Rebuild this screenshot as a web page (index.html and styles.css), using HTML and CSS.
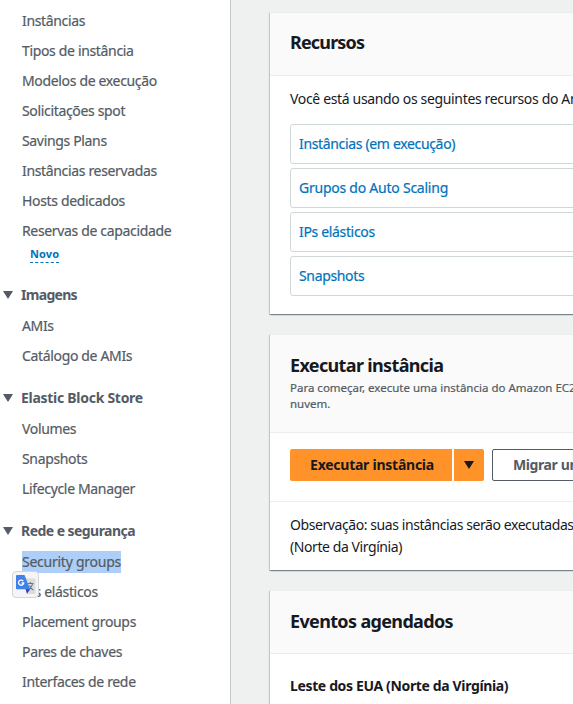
FILE: index.html
```html
<!DOCTYPE html>
<html lang="pt-BR">
<head>
<meta charset="utf-8">
<title>EC2</title>
<link rel="stylesheet" href="styles.css">
</head>
<body>
<div class="app">
  <nav class="sidebar">
    <ul class="links">
      <li><a>Instâncias</a></li>
      <li><a>Tipos de instância</a></li>
      <li><a>Modelos de execução</a></li>
      <li><a>Solicitações spot</a></li>
      <li><a>Savings Plans</a></li>
      <li><a>Instâncias reservadas</a></li>
      <li><a>Hosts dedicados</a></li>
      <li><a>Reservas de capacidade</a></li>
    </ul>
    <div class="new-row"><span class="new">Novo</span></div>
    <h3><svg class="caret" viewBox="0 0 10 8"><path d="M0 0h10L5 8z"/></svg>Imagens</h3>
    <ul class="links">
      <li><a>AMIs</a></li>
      <li><a>Catálogo de AMIs</a></li>
    </ul>
    <h3 class="storage"><svg class="caret" viewBox="0 0 10 8"><path d="M0 0h10L5 8z"/></svg>Elastic Block Store</h3>
    <ul class="links">
      <li><a>Volumes</a></li>
      <li><a>Snapshots</a></li>
      <li><a>Lifecycle Manager</a></li>
    </ul>
    <h3 class="network"><svg class="caret" viewBox="0 0 10 8"><path d="M0 0h10L5 8z"/></svg>Rede e segurança</h3>
    <ul class="links">
      <li class="anchor"><a class="selected">Security groups</a>
        <span class="translate">
          <svg viewBox="0 0 27 27">
            <path d="M13 7.500h9.500q1 0 1 1v13.500q0 1-1 1h-6z" fill="#dcdcdc"/>
            <path d="M13.500 18h4.700L15 23z" fill="#3a3fc0"/>
            <path d="M5 4h7.500l5.700 14.300H5q-1 0-1-1V5q0-1 1-1z" fill="#4081ec"/>
            <path d="M11.300 10.200a2.600 2.600 0 1 0 .4 1.800H9.600" fill="none" stroke="#fff" stroke-width="1.300"/>
            <path d="M16 12.500h5.500M18.500 11v1.500M20.700 12.500q-.8 4-4 6M17.500 14.500q1.300 3 3.800 4.500" fill="none" stroke="#607988" stroke-width="1.100"/>
          </svg>
        </span>
      </li>
      <li><a>IPs elásticos</a></li>
      <li><a>Placement groups</a></li>
      <li><a>Pares de chaves</a></li>
      <li><a>Interfaces de rede</a></li>
    </ul>
  </nav>
  <main class="content">
    <section class="card">
      <header><h2 class="summary">Recursos</h2></header>
      <div class="body resources">
        <p class="intro">Você está usando os seguintes recursos do Amazon EC2</p>
        <a class="resource">Instâncias (em execução)</a>
        <a class="resource scaling">Grupos do Auto Scaling</a>
        <a class="resource">IPs elásticos</a>
        <a class="resource">Snapshots</a>
      </div>
    </section>
    <section class="card">
      <header class="described"><h2 class="launch">Executar instância</h2>
        <p>Para começar, execute uma instância do Amazon EC2,<br>nuvem.</p></header>
      <div class="actions">
        <button class="primary">Executar instância</button>
        <button class="primary menu"><svg viewBox="0 0 10 8"><path d="M0 0h10L5 8z" fill="#16191f"/></svg></button>
        <button class="secondary">Migrar um servidor</button>
      </div>
      <div class="note">Observação: suas instâncias serão executadas<br>(Norte da Virgínia)</div>
    </section>
    <section class="card">
      <header><h2 class="events">Eventos agendados</h2></header>
      <div class="body region">Leste dos EUA (Norte da Virgínia)</div>
    </section>
  </main>
</div>
</body>
</html>
```
FILE: styles.css
```css
* { box-sizing: border-box; }
html, body { margin: 0; height: 100%; overflow: hidden; }
body {
  font: 14px/22px "Noto Sans", sans-serif;
  letter-spacing: -0.34px;
  color: #16191f;
  background: #eff1f1;
}
h2, h3, p, ul { margin: 0; padding: 0; }
ul { list-style: none; }
.app { display: flex; height: 704px; overflow: hidden; }
.sidebar {
  flex: none;
  width: 231px;
  padding-top: 10px;
  background: #fff;
  border-right: 1px solid #c4caca;
  color: #545b64;
}
.links { display: flex; flex-direction: column; gap: 8px; padding-left: 22px; }
.links li { height: 22px; white-space: nowrap; -webkit-text-stroke: 0.2px; }
.links a { display: inline-block; }
.new-row { height: 22px; padding: 3px 0 0 30px; }
.new {
  display: block;
  width: 29px;
  height: 18px;
  font-size: 11px;
  line-height: 17px;
  font-weight: 700;
  letter-spacing: 0.1px;
  color: #0073bb;
  border-bottom: 1px dashed #0073bb;
}
h3 {
  display: flex;
  align-items: center;
  height: 22px;
  margin: 20px 0 9px;
  padding-left: 3px;
  font-size: 14px;
  letter-spacing: -0.65px;
  white-space: nowrap;
}
h3:not(.network):not(.storage) { letter-spacing: -0.7px; }
.storage { letter-spacing: -0.28px; }
.network { letter-spacing: -0.55px; }
.caret { width: 10px; height: 8px; margin-right: 8px; fill: #545b64; }
.anchor { position: relative; }
.selected { width: 99px; letter-spacing: -0.25px; background: #accef7; }
.translate {
  position: absolute;
  left: -10px;
  top: 20px;
  width: 27px;
  height: 27px;
  background: #f5f5f5;
  border: 1px solid #d4d4d4;
  border-radius: 4px;
}
.translate svg { display: block; width: 27px; height: 27px; margin: -1px; }
.content {
  flex: none;
  width: 420px;
  padding: 12px 0 0 39px;
  display: flex;
  flex-direction: column;
  gap: 20px;
}
.card {
  background: #fff;
  border-top: 1px solid #eaeded;
  white-space: nowrap;
  box-shadow: 0 1px 1px rgba(0,28,36,.3), 1px 1px 1px rgba(0,28,36,.15), -1px 1px 1px rgba(0,28,36,.15);
}
header {
  height: 63px;
  padding: 19px 20px 0;
  background: #fafafa;
  border-bottom: 1px solid #eaeded;
}
h2 { font-size: 18px; line-height: 22px; letter-spacing: -0.65px; }
.summary { margin-top: -1px; letter-spacing: -0.85px; }
.resources { display: flex; flex-direction: column; gap: 4px; padding: 12px 20px 18px; }
.intro { margin-bottom: 10px; }
.resource {
  height: 40px;
  padding: 8px;
  border: 1px solid #d0d7d7;
  border-radius: 3px;
  color: #0073bb;
  -webkit-text-stroke: 0.2px;
}
.scaling { letter-spacing: -0.24px; }
.described { height: 98px; }
.described p { margin-top: 4px; font-size: 11.5px; line-height: 16px; letter-spacing: 0; color: #545b64; -webkit-text-stroke: 0.2px; }
.actions { display: flex; height: 69px; padding: 16px 20px 0; border-bottom: 1px solid #eaeded; }
button {
  flex: none;
  height: 32px;
  padding: 0;
  border: 0;
  font: 700 14px/20px "Noto Sans", sans-serif;
  letter-spacing: -0.25px;
  color: #16191f;
}
.primary { width: 162px; padding-left: 2px; background: #ff9229; border-radius: 2px 0 0 2px; }
.menu { display: flex; align-items: center; justify-content: center; width: 30px; margin-left: 2px; padding: 0; border-radius: 0 2px 2px 0; }
.menu svg { width: 10px; height: 8px; }
.secondary { width: 190px; margin-left: 8px; padding-left: 20px; text-align: left; letter-spacing: -0.4px; background: #fff; border: 1px solid #545b64; border-radius: 2px; color: #545b64; }
.note { height: 68px; padding: 12px 20px; letter-spacing: -0.42px; }
.region { height: 100px; padding: 21px 20px; font-weight: 700; letter-spacing: -0.36px; }
```
